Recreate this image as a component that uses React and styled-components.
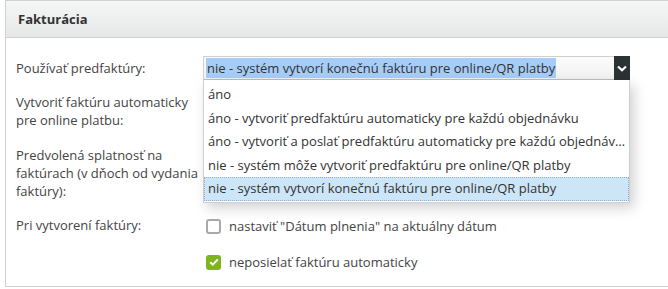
import React from "react";
import styled, { createGlobalStyle } from "styled-components";

const Global = createGlobalStyle`
  html, body {
    margin: 0;
    padding: 0;
    background: #fff;
    overflow: hidden;
  }
  body {
    font-family: "Open Sans", "Noto Sans", sans-serif;
    font-size: 13px;
    color: #444;
  }
`;

const Panel = styled.section`
  margin-left: 5px;
  border: 1px solid #d2d2d2;
  border-right: none;
  box-sizing: border-box;
  height: 287px;
`;

const Header = styled.header`
  height: 36px;
  display: flex;
  align-items: center;
  padding-left: 12px;
  background: linear-gradient(#f5f6f6, #e6e7e7);
  border-bottom: 1px solid #d0d0d0;
  font-weight: 700;
  font-size: 13px;
  color: #333;
`;

const Body = styled.div`
  padding: 18px 0 0 10px;
  display: flex;
  flex-direction: column;
`;

const Row = styled.div`
  display: flex;
  align-items: flex-start;
  margin-top: ${(p) => p.$gap || 0}px;
`;

const Label = styled.div`
  width: 187px;
  flex: none;
  line-height: ${(p) => p.$lh || 18}px;
  color: #444;
`;

const Control = styled.div`
  position: relative;
  flex: none;
  width: 427px;
`;

const SelectBox = styled.div`
  height: 24px;
  box-sizing: border-box;
  border: 1px solid #cfcfcf;
  border-bottom-color: #bdbdbd;
  background: linear-gradient(#fbfbfb, #f2f2f2);
  display: flex;
  align-items: center;
  padding-left: 2px;
`;

const Selected = styled.span`
  background: #a6cdf8;
  line-height: 20px;
  padding: 0 1px;
  color: #333;
  white-space: nowrap;
`;

const Arrow = styled.div`
  position: absolute;
  right: 0;
  top: 0;
  width: 16px;
  height: 24px;
  background: #2b3234;
  display: flex;
  align-items: center;
  justify-content: center;
`;

const List = styled.ul`
  position: absolute;
  left: 0;
  top: 24px;
  width: 100%;
  box-sizing: border-box;
  margin: 0;
  padding: 3px 0 1px;
  list-style: none;
  background: #fff;
  border: 1px solid #cfcfcf;
  border-top: none;
  box-shadow: 4px 5px 12px rgba(0, 0, 0, 0.18);
  z-index: 5;
`;

const Item = styled.li`
  height: 23.5px;
  line-height: 21.5px;
  box-sizing: border-box;
  padding: 0 1px 0 3px;
  white-space: nowrap;
  overflow: hidden;
  text-overflow: ellipsis;
  color: #333;
  border: 1px dotted ${(p) => (p.$active ? "#8aaed8" : "transparent")};
  background: ${(p) => (p.$active ? "#cde6f7" : "transparent")};
`;

const Options = styled.div`
  display: flex;
  flex-direction: column;
  gap: 18px;
  margin-top: 1px;
`;

const Option = styled.label`
  display: flex;
  align-items: center;
  gap: 8px;
  line-height: 18px;
  color: #444;
  padding-left: 3px;
`;

const Box = styled.span`
  width: 15px;
  height: 15px;
  box-sizing: border-box;
  border-radius: 3px;
  border: ${(p) => (p.$checked ? "none" : "2px solid #a9a9a9")};
  background: ${(p) => (p.$checked ? "#7db51f" : "#fff")};
  display: flex;
  align-items: center;
  justify-content: center;
`;

const items = [
  "áno",
  "áno - vytvoriť predfaktúru automaticky pre každú objednávku",
  "áno - vytvoriť a poslať predfaktúru automaticky pre každú objednávku",
  "nie - systém môže vytvoriť predfaktúru pre online/QR platby",
  "nie - systém vytvorí konečnú faktúru pre online/QR platby",
];

export default function App() {
  return (
    <>
      <Global />
      <Panel>
        <Header>Fakturácia</Header>
        <Body>
          <Row>
            <Label $lh={24}>Používať predfaktúry:</Label>
            <Control>
              <SelectBox>
                <Selected>{items[4]}</Selected>
              </SelectBox>
              <Arrow>
                <svg width="10" height="7" viewBox="0 0 10 7">
                  <path d="M1 1.5 L5 5.2 L9 1.5" fill="none" stroke="#fff" strokeWidth="2.2" />
                </svg>
              </Arrow>
              <List>
                {items.map((t, i) => (
                  <Item key={i} $active={i === 4}>
                    {t}
                  </Item>
                ))}
              </List>
            </Control>
          </Row>
          <Row $gap={13}>
            <Label>
              Vytvoriť faktúru automaticky
              <br />
              pre online platbu:
            </Label>
          </Row>
          <Row $gap={17}>
            <Label>
              Predvolená splatnosť na
              <br />
              faktúrach (v dňoch od vydania
              <br />
              faktúry):
            </Label>
          </Row>
          <Row $gap={16}>
            <Label>Pri vytvorení faktúry:</Label>
            <Options>
              <Option>
                <Box />
                nastaviť "Dátum plnenia" na aktuálny dátum
              </Option>
              <Option>
                <Box $checked>
                  <svg width="10" height="8" viewBox="0 0 10 8">
                    <path d="M1.2 4.2 L3.8 6.6 L8.8 1.4" fill="none" stroke="#fff" strokeWidth="2" />
                  </svg>
                </Box>
                neposielať faktúru automaticky
              </Option>
            </Options>
          </Row>
        </Body>
      </Panel>
    </>
  );
}
